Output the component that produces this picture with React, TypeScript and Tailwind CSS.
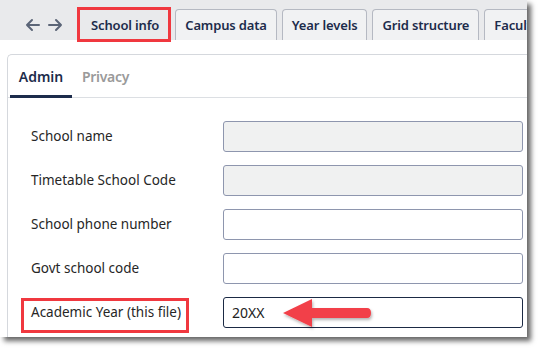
import React from "react";

const font = { fontFamily: '"Segoe UI", "Noto Sans", "Open Sans", sans-serif' };

function Tab({ label, active }: { label: string; active?: boolean }) {
  return (
    <div
      className={
        "h-[31px] pt-[2px] flex items-center rounded-t-[4px] border border-b-0 text-[13px] tracking-[-0.15px] font-semibold text-[#1d2c4b] whitespace-nowrap shrink-0 " +
        (active ? "px-[10px] bg-[#e9eaec] border-transparent" : "px-[9px] bg-[#f1f2f3] border-[#b5b9c2]")
      }
    >
      {label}
    </div>
  );
}

function Row({ label, disabled, value, focus }: { label: string; disabled?: boolean; value?: string; focus?: boolean }) {
  return (
    <div className="flex items-center h-[31px]">
      <div className="w-[215px] pl-[23px] text-[13.5px] text-[#262626]">{label}</div>
      <div
        className={
          "w-[300px] h-[31px] rounded-[3px] border flex items-center px-[8px] text-[14px] text-[#222] " +
          (disabled ? "bg-[#f0f1f1] " : "bg-white ") +
          (focus ? "border-[#1b2a44]" : "border-[#8e96ae]")
        }
      >
        {value}
      </div>
    </div>
  );
}

export default function App() {
  return (
    <div className="w-[542px] h-[352px] bg-white relative overflow-hidden" style={font}>
      <div className="w-[527px] h-[337px] bg-white overflow-hidden shadow-[4px_4px_5px_rgba(0,0,0,0.6)] relative">
        <div className="h-[40px] bg-[#e9eaec] flex items-end">
          <div className="flex items-center gap-[8px] pl-[25px] pr-[17px] h-[31px] text-[#5b6577] shrink-0">
            <svg width="15" height="14" viewBox="0 0 15 14" fill="none" stroke="currentColor" strokeWidth="2" strokeLinecap="round" strokeLinejoin="round">
              <path d="M14 7H2M7 2L2 7l5 5" />
            </svg>
            <svg width="15" height="14" viewBox="0 0 15 14" fill="none" stroke="currentColor" strokeWidth="2" strokeLinecap="round" strokeLinejoin="round">
              <path d="M1 7h12M8 2l5 5-5 5" />
            </svg>
          </div>
          <div className="flex items-end gap-[5px]">
            <Tab label="School info" active />
            <Tab label="Campus data" />
            <Tab label="Year levels" />
            <Tab label="Grid structure" />
            <Tab label="Faculties" />
          </div>
        </div>
        <div className="pl-[7px] pt-[14px]">
          <div className="border-l border-t border-[#d5d8dd] rounded-tl-[5px] h-[300px]">
            <div className="flex h-[43px] border-b border-[#dcdfe3]">
              <div className="relative w-[62px] ml-[2px] flex items-center justify-center text-[14px] font-semibold text-[#1d2c4b]">
                Admin
                <div className="absolute left-0 right-0 bottom-[-1px] h-[3px] bg-[#1d2c4b]" />
              </div>
              <div className="flex items-center pl-[10px] text-[14px] font-semibold text-[#9a9a9a] tracking-[-0.3px]">Privacy</div>
            </div>
            <div className="flex flex-col gap-[13px] pt-[23px]">
              <Row label="School name" disabled />
              <Row label="Timetable School Code" disabled />
              <Row label="School phone number" />
              <Row label="Govt school code" />
              <Row label="Academic Year (this file)" value="20XX" focus />
            </div>
          </div>
        </div>
        {/* annotations */}
        <div className="absolute left-[77px] top-[7px] w-[94px] h-[35px] border-[3px] border-[#f0383f]" />
        <div className="absolute left-[21px] top-[298px] w-[168px] h-[35px] border-[3px] border-[#f0383f]" />
        <svg className="absolute left-[280px] top-[296px]" width="100" height="36" viewBox="0 0 100 36">
          <defs>
            <filter id="sh" x="-20%" y="-30%" width="140%" height="160%">
              <feDropShadow dx="1" dy="2" stdDeviation="1.5" floodColor="#000" floodOpacity="0.3" />
            </filter>
          </defs>
          <g filter="url(#sh)">
            <path d="M3 17 L32 3 L32 12 L87 12 Q91 12 91 17 Q91 22 87 22 L32 22 L32 31 Z" fill="#f2414a" />
          </g>
        </svg>
      </div>
    </div>
  );
}
